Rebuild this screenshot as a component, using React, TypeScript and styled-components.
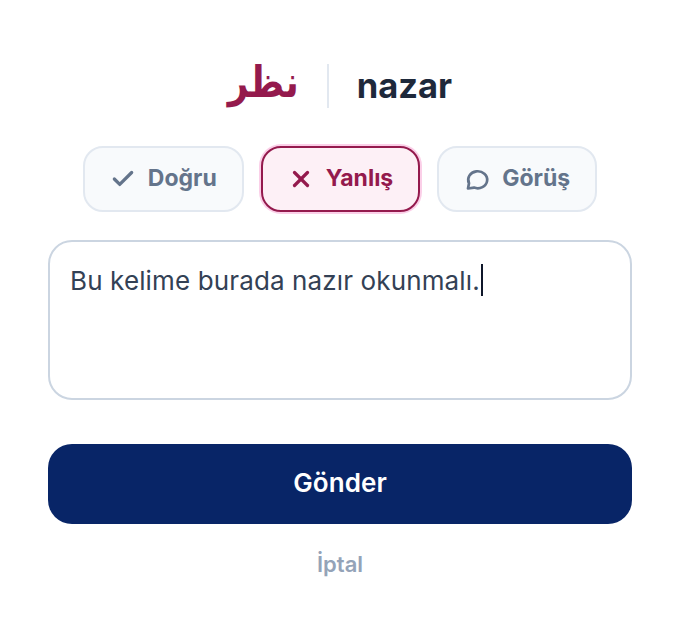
import { Check, X } from "lucide-react";
import styled, { createGlobalStyle } from "styled-components";

const GlobalStyle = createGlobalStyle`
  html, body {
    margin: 0;
    padding: 0;
    background: #ffffff;
  }

  * {
    box-sizing: border-box;
  }
`;

function BubbleIcon() {
  return (
    <svg
      width="26"
      height="26"
      viewBox="0 0 26 26"
      fill="none"
      stroke="currentColor"
      strokeWidth="2.7"
      strokeLinecap="round"
      strokeLinejoin="round"
    >
      <path d="M4 22.500l1-5.300A9.500 8.500 0 1 1 10 21.600z" />
    </svg>
  );
}

const choices = [
  { label: "Doğru", icon: <Check size={26} strokeWidth={3} /> },
  { label: "Yanlış", icon: <X size={26} strokeWidth={3} />, active: true },
  { label: "Görüş", icon: <BubbleIcon /> },
];

export default function App() {
  return (
    <>
      <GlobalStyle />
      <Page>
        <Header>
          <ArabicWord lang="ar" dir="rtl">
            نظر
          </ArabicWord>
          <Divider />
          <Word>nazar</Word>
        </Header>

        <Choices>
          {choices.map(({ label, icon, active }) => (
            <ChoiceButton key={label} type="button" $active={active}>
              {icon}
              <ChoiceLabel>{label}</ChoiceLabel>
            </ChoiceButton>
          ))}
        </Choices>

        <Comment role="textbox" aria-multiline="true">
          Bu kelime burada nazır okunmalı.
          <Caret />
        </Comment>

        <SubmitButton type="button">Gönder</SubmitButton>
        <CancelButton type="button">İptal</CancelButton>
      </Page>
    </>
  );
}

const Page = styled.main`
  width: 680px;
  height: 632px;
  padding: 56px 48px 0;
  display: flex;
  flex-direction: column;
  font-family: Inter, "Noto Sans", sans-serif;
  background: #ffffff;
`;

const Header = styled.header`
  height: 60px;
  display: flex;
  align-items: center;
  justify-content: center;
  gap: 28px;
`;

const ArabicWord = styled.span`
  font-family: "DejaVu Sans", sans-serif;
  font-size: 36px;
  font-weight: 700;
  line-height: 60px;
  color: #941a4d;
  transform: scaleY(1.2);
  transform-origin: 50% 75%;
`;

const Divider = styled.span`
  width: 2px;
  height: 44px;
  background: #e2e8f0;
`;

const Word = styled.span`
  font-size: 34.5px;
  font-weight: 700;
  line-height: 44px;
  color: #1e293b;
`;

const Choices = styled.div`
  margin-top: 30px;
  display: flex;
  justify-content: center;
  gap: 17px;
`;

const ChoiceButton = styled.button<{ $active?: boolean }>`
  height: 66px;
  padding: 0 25px;
  display: flex;
  align-items: center;
  gap: 12px;
  border-radius: 20px;
  border: 2px solid ${({ $active }) => ($active ? "#941a4d" : "#e2e8f0")};
  background: ${({ $active }) => ($active ? "#fdf0f6" : "#f8fafc")};
  box-shadow: ${({ $active }) => ($active ? "0 0 0 2px #fbcfe8" : "none")};
  color: ${({ $active }) => ($active ? "#941a4d" : "#64748b")};
  font-family: inherit;
  font-size: 23px;
  font-weight: 700;
  cursor: pointer;
`;

const ChoiceLabel = styled.span`
  padding-bottom: 2px;
`;

const Comment = styled.div`
  margin-top: 28px;
  height: 160px;
  padding: 19px 20px;
  border: 2px solid #cbd5e1;
  border-radius: 24px;
  background: #ffffff;
  color: #334155;
  font-size: 26px;
  letter-spacing: 0.13px;
  line-height: 40px;
`;

const Caret = styled.span`
  display: inline-block;
  width: 2px;
  height: 32px;
  margin-left: 1px;
  background: #0f172a;
  vertical-align: -6px;
`;

const SubmitButton = styled.button`
  margin-top: 44px;
  height: 80px;
  padding-bottom: 4px;
  border: none;
  border-radius: 24px;
  background: #082567;
  color: #ffffff;
  font-family: inherit;
  font-size: 26px;
  font-weight: 600;
  letter-spacing: 0.1px;
  cursor: pointer;
`;

const CancelButton = styled.button`
  margin-top: 23px;
  align-self: center;
  padding: 4px 8px;
  border: none;
  background: transparent;
  color: #94a3b8;
  font-family: inherit;
  font-size: 22px;
  font-weight: 600;
  cursor: pointer;
`;
